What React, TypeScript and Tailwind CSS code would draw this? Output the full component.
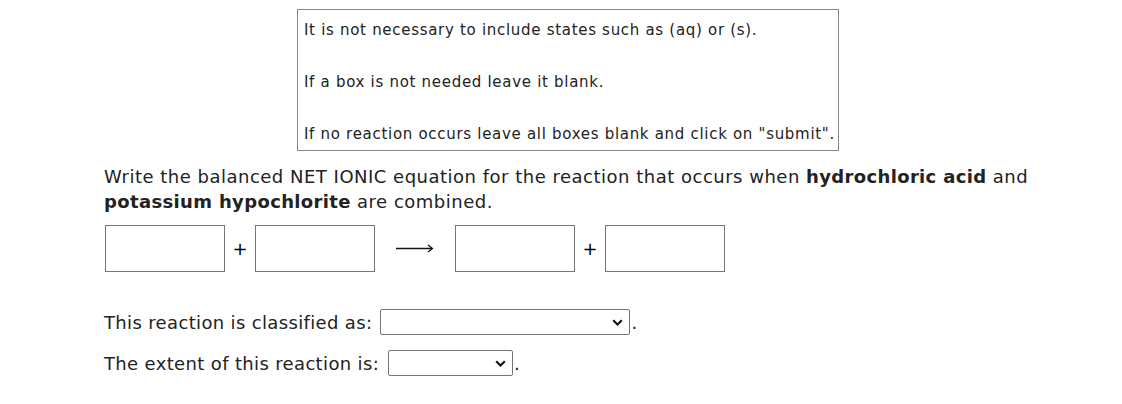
import React from "react";

const font = { fontFamily: '"DejaVu Sans", Verdana, sans-serif' };

function Chevron() {
  return (
    <svg width="11" height="7" viewBox="0 0 11 7" className="block">
      <path d="M1.2 1.3 L5.5 5.5 L9.8 1.3" fill="none" stroke="#111" strokeWidth="2.1" />
    </svg>
  );
}

function Box() {
  return <div className="w-[120px] h-[47px] border border-[#767676] bg-white shrink-0" />;
}

function Plus() {
  return <div className="w-[30px] flex justify-center items-center text-[18px] leading-none text-black">+</div>;
}

function FakeSelect({ w }: { w: string }) {
  return (
    <div className={`${w} h-[26px] border border-[#767676] rounded-[2px] bg-white flex items-center justify-end pr-[6px] shrink-0`}>
      <Chevron />
    </div>
  );
}

export default function App() {
  return (
    <div className="w-[1122px] h-[404px] bg-white text-[#222]" style={font}>
      <div className="pt-[9px] pl-[297px]">
        <div className="w-[542px] h-[142px] border border-[#888] px-[6px] pt-[9px] text-[15px] tracking-[0.7px] text-[#222]">
          <p className="h-[52px] leading-[22px]">It is not necessary to include states such as (aq) or (s).</p>
          <p className="h-[52px] leading-[22px]">If a box is not needed leave it blank.</p>
          <p className="leading-[22px] whitespace-nowrap">If no reaction occurs leave all boxes blank and click on "submit".</p>
        </div>
      </div>
      <div className="pl-[104px] pt-[13px] text-[18px] leading-[25px] text-[#222] tracking-[0.5px]">
        <p className="whitespace-nowrap">
          Write the balanced NET IONIC equation for the reaction that occurs when{" "}
          <b className="tracking-[0.35px]">hydrochloric acid</b> and
          <br />
          <b className="tracking-[0.35px]">potassium hypochlorite</b> are combined.
        </p>
      </div>
      <div className="pl-[105px] pt-[11px] flex items-center">
        <Box />
        <Plus />
        <Box />
        <div className="w-[80px] flex pl-[21px]">
          <svg width="38" height="9" viewBox="0 0 38 9" className="block">
            <line x1="0" y1="4.5" x2="36" y2="4.5" stroke="#111" strokeWidth="1.3" />
            <path d="M32 1 L36.5 4.5 L32 8" fill="none" stroke="#111" strokeWidth="1.2" />
          </svg>
        </div>
        <Box />
        <Plus />
        <Box />
      </div>
      <div className="pl-[104px] pt-[37px] text-[18px] text-[#222] tracking-[0.35px]">
        <div className="flex items-center h-[26px]">
          <span className="whitespace-nowrap">This reaction is classified as:</span>
          <span className="w-[8px]" />
          <FakeSelect w="w-[250px]" />
          <span className="pl-[1px]">.</span>
        </div>
        <div className="flex items-center h-[26px] mt-[15px]">
          <span className="whitespace-nowrap">The extent of this reaction is:</span>
          <span className="w-[9px]" />
          <FakeSelect w="w-[125px]" />
          <span className="pl-[1px]">.</span>
        </div>
      </div>
    </div>
  );
}
